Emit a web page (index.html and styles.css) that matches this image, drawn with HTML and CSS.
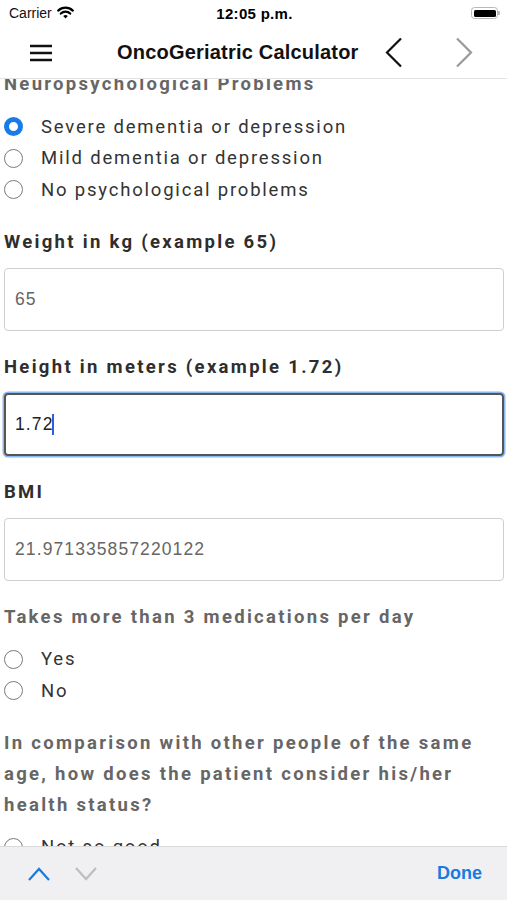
FILE: index.html
```html
<!DOCTYPE html>
<html lang="en">
<head>
<meta charset="utf-8">
<title>OncoGeriatric Calculator</title>
<link rel="stylesheet" href="styles.css">
</head>
<body>
<div class="screen">
  <div class="status">
    <div class="status-left">
      <span class="carrier">Carrier</span>
      <svg class="wifi" width="17" height="13" viewBox="0 0 17 13">
        <path d="M8.5 12.5 L6.2 10 A3.3 3.3 0 0 1 10.8 10 Z" fill="#000"/>
        <path d="M3.8 7.6 A6.6 6.6 0 0 1 13.2 7.6" stroke="#000" stroke-width="2.2" fill="none" stroke-linecap="round"/>
        <path d="M1.2 4.6 A10.5 10.5 0 0 1 15.8 4.6" stroke="#000" stroke-width="2.2" fill="none" stroke-linecap="round"/>
      </svg>
    </div>
    <div class="time">12:05 p.m.</div>
    <div class="status-right">
      <div class="battery"><div class="battery-fill"></div></div>
      <div class="battery-tip"></div>
    </div>
  </div>

  <div class="navbar">
    <svg class="menu" width="24" height="18" viewBox="0 0 24 18">
      <path d="M1 2 H23 M1 9 H23 M1 16 H23" stroke="#111" stroke-width="2.4"/>
    </svg>
    <div class="title">OncoGeriatric Calculator</div>
    <svg class="chev" width="20" height="31" viewBox="0 0 20 31">
      <path d="M17 1.5 L3 15.5 L17 29.5" stroke="#111" stroke-width="2.2" fill="none"/>
    </svg>
    <svg class="chev fwd" width="20" height="31" viewBox="0 0 20 31">
      <path d="M3 1.5 L17 15.5 L3 29.5" stroke="#999" stroke-width="2.2" fill="none"/>
    </svg>
  </div>

  <div class="content">
    <div class="inner">
      <div class="label muted first">Neuropsychological Problems</div>
      <div class="radios">
        <div class="radio-row"><span class="radio on"></span><span>Severe dementia or depression</span></div>
        <div class="radio-row"><span class="radio"></span><span>Mild dementia or depression</span></div>
        <div class="radio-row"><span class="radio"></span><span>No psychological problems</span></div>
      </div>

      <div class="field">
        <div class="label">Weight in kg (example 65)</div>
        <div class="input">65</div>
      </div>

      <div class="field">
        <div class="label">Height in meters (example 1.72)</div>
        <div class="input focus"><span class="dark">1.72</span><span class="caret"></span></div>
      </div>

      <div class="field">
        <div class="label">BMI</div>
        <div class="input">21.971335857220122</div>
      </div>

      <div class="field">
        <div class="label muted">Takes more than 3 medications per day</div>
        <div class="radios">
          <div class="radio-row"><span class="radio"></span><span>Yes</span></div>
          <div class="radio-row"><span class="radio"></span><span>No</span></div>
        </div>
      </div>

      <div class="field">
        <div class="label muted">In comparison with other people of the same age, how does the patient consider his/her health status?</div>
        <div class="radios">
          <div class="radio-row"><span class="radio"></span><span>Not so good</span></div>
          <div class="radio-row"><span class="radio"></span><span>Good</span></div>
        </div>
      </div>
    </div>
  </div>

  <div class="toolbar">
    <div class="arrows">
      <svg width="24" height="16" viewBox="0 0 24 16">
        <path d="M2 14 L12 3 L22 14" stroke="#1a7ae0" stroke-width="2.2" fill="none"/>
      </svg>
      <svg width="24" height="16" viewBox="0 0 24 16">
        <path d="M2 2 L12 13 L22 2" stroke="#bdbdc2" stroke-width="2.2" fill="none"/>
      </svg>
    </div>
    <div class="done">Done</div>
  </div>
</div>
</body>
</html>
```
FILE: styles.css
```css
* { box-sizing: border-box; }
html, body { margin: 0; padding: 0; background: #fff; }
.screen {
  width: 507px;
  height: 900px;
  display: flex;
  flex-direction: column;
  overflow: hidden;
  font-family: Roboto, "Liberation Sans", sans-serif;
}
.status {
  height: 26px;
  flex: none;
  display: flex;
  align-items: center;
  justify-content: space-between;
  padding: 0 7px 0 9px;
  font-family: "Liberation Sans", Arial, sans-serif;
}
.status-left { display: flex; align-items: center; gap: 5px; width: 120px; }
.carrier { font-size: 14px; color: #111; }
.wifi { margin-top: -1px; }
.time { font-size: 15px; font-weight: bold; color: #000; letter-spacing: 0.3px; }
.status-right { display: flex; align-items: center; width: 120px; justify-content: flex-end; }
.battery {
  width: 27px; height: 12px; border: 1.5px solid #b8b8b8; border-radius: 3.5px; padding: 1.5px;
}
.battery-fill { width: 100%; height: 100%; background: #000; border-radius: 1.5px; }
.battery-tip { width: 2px; height: 4px; background: #b8b8b8; border-radius: 0 1px 1px 0; }

.navbar {
  height: 53px;
  flex: none;
  display: flex;
  align-items: center;
  border-bottom: 1px solid #e3e3e3;
  padding: 0 0 0 29px;
}
.menu { flex: none; margin-top: 1px; }
.title {
  font-family: "Liberation Sans", Arial, sans-serif;
  font-weight: bold;
  font-size: 20px;
  color: #111;
  margin-left: 64px;
  letter-spacing: 0.2px;
}
.chev { flex: none; margin-left: 25px; margin-top: 1px; }
.chev.fwd { margin-left: 50px; }

.content { flex: 1; overflow: hidden; background: #fff; }
.inner { padding: 0 3px 0 4px; }
.first { margin-top: -10px; }

.label {
  font-weight: bold;
  font-size: 18.5px;
  line-height: 31px;
  letter-spacing: 2.3px;
  color: #2e2e2e;
}
.label.muted { color: #666; }

.radios { margin-top: 11px; }
.radio-row {
  display: flex;
  align-items: center;
  height: 31.5px;
  font-size: 18.5px;
  letter-spacing: 1.8px;
  color: #333;
  gap: 18px;
}
.radio {
  flex: none;
  width: 19px; height: 19px;
  border-radius: 50%;
  border: 1.6px solid #7a7a7a;
  background: #fff;
}
.radio.on { border: 5px solid #1a7ae8; }

.field { margin-top: 21px; }
.input {
  margin-top: 10px;
  height: 63px;
  border: 1px solid #cfcfcf;
  border-radius: 4px;
  display: flex;
  align-items: center;
  padding-left: 10px;
  font-family: "Liberation Sans", Arial, sans-serif;
  font-size: 17.5px;
  letter-spacing: 1.1px;
  color: #666;
}
.input.focus {
  height: 63px;
  margin-bottom: 1px;
  border: 2px solid #555;
  box-shadow: 0 0 0 1.5px #8ab8f0;
  padding-left: 9px;
}
.dark { color: #222; }
.caret { display: inline-block; width: 2px; height: 21px; background: #2f5ee0; margin-left: -1px; }

.toolbar {
  height: 54px;
  flex: none;
  background: #f0f0f2;
  border-top: 1px solid #d9d9dc;
  display: flex;
  align-items: center;
  justify-content: space-between;
  padding: 0 25px 0 27px;
}
.arrows { display: flex; gap: 23px; align-items: center; }
.done {
  font-family: "Liberation Sans", Arial, sans-serif;
  font-weight: bold;
  font-size: 18px;
  color: #1a7ae0;
}
```
